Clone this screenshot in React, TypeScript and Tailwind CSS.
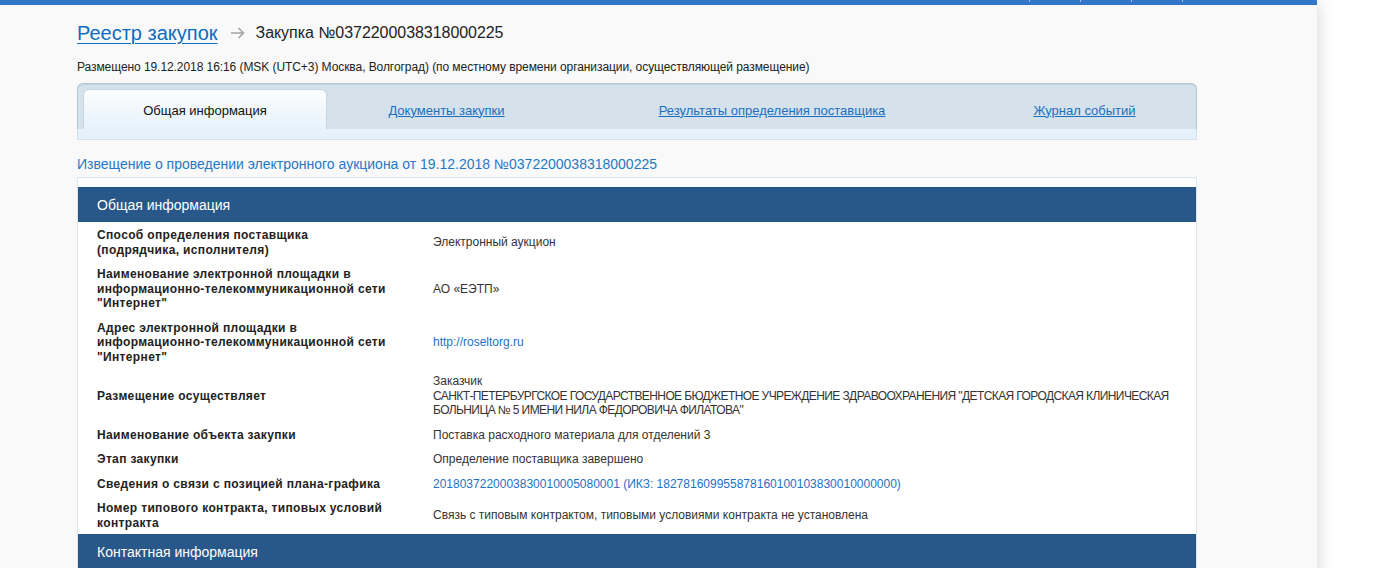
import React from "react";

const U = ({ children }: { children: React.ReactNode }) => (
  <span className="tracking-[-0.6px]">{children}</span>
);

const rows: { label: React.ReactNode; value: React.ReactNode }[] = [
  {
    label: (
      <>
        Способ определения поставщика
        <br />
        (подрядчика, исполнителя)
      </>
    ),
    value: "Электронный аукцион",
  },
  {
    label: (
      <>
        Наименование электронной площадки в
        <br />
        информационно-телекоммуникационной сети
        <br />
        "Интернет"
      </>
    ),
    value: "АО «ЕЭТП»",
  },
  {
    label: (
      <>
        Адрес электронной площадки в
        <br />
        информационно-телекоммуникационной сети
        <br />
        "Интернет"
      </>
    ),
    value: <a className="text-[#1d72c4]">http://roseltorg.ru</a>,
  },
  {
    label: "Размещение осуществляет",
    value: (
      <>
        Заказчик
        <br />
        <U>САНКТ-ПЕТЕРБУРГСКОЕ ГОСУДАРСТВЕННОЕ БЮДЖЕТНОЕ УЧРЕЖДЕНИЕ ЗДРАВООХРАНЕНИЯ "ДЕТСКАЯ ГОРОДСКАЯ КЛИНИЧЕСКАЯ</U>
        <br />
        <U>БОЛЬНИЦА № 5 ИМЕНИ НИЛА ФЕДОРОВИЧА ФИЛАТОВА"</U>
      </>
    ),
  },
  { label: "Наименование объекта закупки", value: "Поставка расходного материала для отделений 3" },
  { label: "Этап закупки", value: "Определение поставщика завершено" },
  {
    label: "Сведения о связи с позицией плана-графика",
    value: (
      <a className="text-[#1d72c4]">
        2018037220003830010005080001 (ИКЗ: 182781609955878160100103830010000000)
      </a>
    ),
  },
  {
    label: (
      <>
        Номер типового контракта, типовых условий
        <br />
        контракта
      </>
    ),
    value: "Связь с типовым контрактом, типовыми условиями контракта не установлена",
  },
];

function Arrow() {
  return (
    <svg width="15" height="12" viewBox="0 0 15 12" fill="none" stroke="#a3a3a3" strokeWidth="1.6">
      <path d="M1 6h12.5M8.5 1l5 5-5 5" />
    </svg>
  );
}

export default function App() {
  const font = { fontFamily: '"Liberation Sans", Arial, sans-serif' };
  return (
    <div className="flex min-h-[568px] bg-white text-[#222]" style={font}>
      <div className="w-[1317px] shrink-0 bg-[#f9f9f9] shadow-[6px_0_14px_-3px_rgba(0,0,0,0.13)]">
        <div className="flex h-[5px] bg-[#3277c7] pr-[134px]">
          <div className="ml-auto flex gap-[50px]">
            <span className="h-[2px] w-px bg-[#9dc0e8]" />
            <span className="h-[2px] w-px bg-[#9dc0e8]" />
            <span className="h-[2px] w-px bg-[#9dc0e8]" />
            <span className="h-[2px] w-px bg-[#9dc0e8]" />
          </div>
        </div>

        <div className="ml-[77px] w-[1120px]">
          <div className="mt-[16px] flex items-center leading-[24px]">
            <a className="text-[20px] text-[#0f6cbf] underline decoration-1 underline-offset-[3px]">Реестр закупок</a>
            <span className="ml-[12px] mr-[11px] flex items-center">
              <Arrow />
            </span>
            <span className="text-[16px] tracking-[-0.05px] text-[#222]">Закупка №0372200038318000225</span>
          </div>

          <div className="mt-[15px] text-[12px] leading-[15px] tracking-[-0.07px] text-[#222]">
            Размещено 19.12.2018 16:16 (MSK (UTC+3) Москва, Волгоград) (по местному времени организации, осуществляющей размещение)
          </div>

          <div className="mt-[8px]">
            <div className="flex h-[46px] items-end rounded-t-[6px] border border-b-0 border-[#b3c5d4] bg-[#d5e1eb] pl-[5px] shadow-[inset_0_1px_0_#c4d4e0]">
              <div className="flex h-[40px] w-[244px] items-center justify-center rounded-t-[6px] border border-b-0 border-[#c6d7e4] bg-gradient-to-b from-[#fdfeff] to-[#e6f2fb] pt-[3px] text-[13px] text-[#111]">
                Общая информация
              </div>
              <div className="flex h-[40px] w-[239px] items-center justify-center pt-[3px] text-[13px]">
                <a className="text-[#1b6fc2] underline">Документы закупки</a>
              </div>
              <div className="flex h-[40px] w-[412px] items-center justify-center pt-[3px] text-[13px]">
                <a className="text-[#1b6fc2] underline">Результаты определения поставщика</a>
              </div>
              <div className="flex h-[40px] w-[213px] items-center justify-center pt-[3px] text-[13px]">
                <a className="text-[#1b6fc2] underline">Журнал событий</a>
              </div>
            </div>
            <div className="h-[11px] border-x border-b border-[#d3e2ee] bg-[#e6f2fb]" />
          </div>

          <div className="mt-[15px] text-[14px] leading-[18px] text-[#1f78c8]">
            Извещение о проведении электронного аукциона от 19.12.2018 №0372200038318000225
          </div>

          <div className="mt-[4px] border border-[#dae5ee] bg-white pt-[9px]">
            <div className="flex h-[35px] items-center bg-[#28588a] pl-[19px] pt-[2px] text-[14px] text-white">
              Общая информация
            </div>
            <div className="flex flex-col">
              {rows.map((r, i) => (
                <div key={i} className="grid grid-cols-[355px_1fr] py-[5px] pt-[6px] pb-[4px] text-[12px] leading-[14.5px]">
                  <div className="flex items-center whitespace-nowrap pl-[19px] font-bold tracking-[0.35px] text-[#222]">
                    <div>{r.label}</div>
                  </div>
                  <div className="flex items-center whitespace-nowrap pr-[20px] text-[#333]">
                    <div>{r.value}</div>
                  </div>
                </div>
              ))}
            </div>
            <div className="flex h-[35px] items-center bg-[#28588a] pl-[19px] pt-[2px] text-[14px] text-white">
              Контактная информация
            </div>
            <div className="h-[60px]" />
          </div>
        </div>
      </div>
      <div className="flex-1" />
    </div>
  );
}
